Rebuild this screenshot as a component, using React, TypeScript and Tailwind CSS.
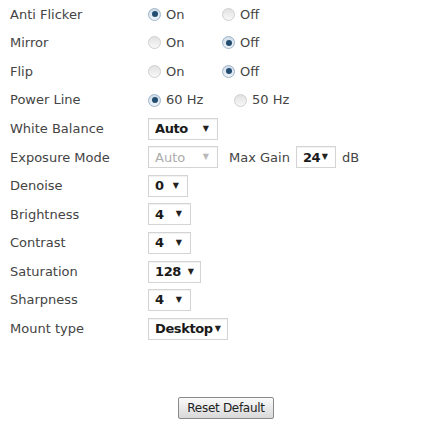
const font = "font-['DejaVu_Sans',Verdana,sans-serif]";

function Radio({ checked }: { checked: boolean }) {
  return (
    <span
      className={`inline-flex h-[13px] w-[13px] shrink-0 items-center justify-center rounded-full border ${
        checked
          ? "border-[#9fb4c8] bg-gradient-to-b from-[#cfdcea] to-[#eef3f8]"
          : "border-[#cfcfcf] bg-gradient-to-b from-[#e2e2e2] to-[#f8f8f8]"
      }`}
    >
      {checked && <span className="h-[6px] w-[6px] rounded-full bg-[#234d70]" />}
    </span>
  );
}

function RadioPair({ a, b, on, gap = "w-[58px]" }: { a: string; b: string; on: 0 | 1; gap?: string }) {
  return (
    <div className="flex items-center">
      <div className={`flex items-center gap-[5px] ${gap}`}>
        <Radio checked={on === 0} />
        <span>{a}</span>
      </div>
      <div className="ml-[16px] flex items-center gap-[5px]">
        <Radio checked={on === 1} />
        <span>{b}</span>
      </div>
    </div>
  );
}

function Select({ value, w, pr = "pr-[8px]", disabled = false }: { value: string; w: string; pr?: string; disabled?: boolean }) {
  return (
    <div
      className={`flex h-[22px] items-center justify-between border border-[#d4d4d4] bg-white pl-[6px] shadow-[inset_0_1px_1px_rgba(0,0,0,0.06)] ${pr} ${w}`}
    >
      <span className={disabled ? "text-[#ababab]" : "font-bold tracking-[-0.4px] text-[#1a1a1a]"}>{value}</span>
      <span className={`text-[8px] ${disabled ? "text-[#b8b8b8]" : "text-[#222]"}`}>▼</span>
    </div>
  );
}

function Row({ label, children }: { label: string; children: React.ReactNode }) {
  return (
    <div className="flex h-[28.6px] items-center">
      <div className="w-[138px] shrink-0">{label}</div>
      {children}
    </div>
  );
}

export default function App() {
  return (
    <div className={`h-screen w-screen bg-white pl-[10px] text-[13px] text-[#444] ${font}`}>
      <div className="flex flex-col">
        <Row label="Anti Flicker">
          <RadioPair a="On" b="Off" on={0} />
        </Row>
        <Row label="Mirror">
          <RadioPair a="On" b="Off" on={1} />
        </Row>
        <Row label="Flip">
          <RadioPair a="On" b="Off" on={1} />
        </Row>
        <Row label="Power Line">
          <RadioPair a="60 Hz" b="50 Hz" on={0} gap="w-[70px]" />
        </Row>
        <Row label="White Balance">
          <Select value="Auto" w="w-[70px]" />
        </Row>
        <Row label="Exposure Mode">
          <Select value="Auto" w="w-[70px]" disabled />
          <span className="ml-[11px]">Max Gain</span>
          <div className="ml-[6px]">
            <Select value="24" w="w-[40px]" pr="pr-[7px]" />
          </div>
          <span className="ml-[6px]">dB</span>
        </Row>
        <Row label="Denoise">
          <Select value="0" w="w-[40px]" />
        </Row>
        <Row label="Brightness">
          <Select value="4" w="w-[43px]" pr="pr-[8px]" />
        </Row>
        <Row label="Contrast">
          <Select value="4" w="w-[43px]" pr="pr-[8px]" />
        </Row>
        <Row label="Saturation">
          <Select value="128" w="w-[53px]" pr="pr-[6px]" />
        </Row>
        <Row label="Sharpness">
          <Select value="4" w="w-[43px]" pr="pr-[8px]" />
        </Row>
        <Row label="Mount type">
          <Select value="Desktop" w="w-[80px]" pr="pr-[6px]" />
        </Row>
        <div className="mt-[54px] flex">
          <button className="ml-[168px] h-[22px] w-[96px] rounded-[2px] border border-[#8a8a8a] bg-gradient-to-b from-[#fafafa] to-[#d8d8d8] text-[12px] tracking-[-0.3px] text-[#222]">
            Reset Default
          </button>
        </div>
      </div>
    </div>
  );
}
